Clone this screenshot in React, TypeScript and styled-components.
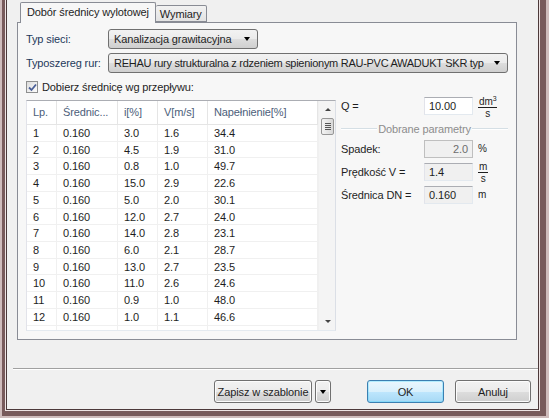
import React from "react";
import styled, { createGlobalStyle } from "styled-components";

const GlobalStyle = createGlobalStyle`
  html, body {
    margin: 0;
    padding: 0;
    overflow: hidden;
    background: #f0f0f0;
  }
  body {
    font-family: "Liberation Sans", Arial, sans-serif;
    font-size: 11px;
    letter-spacing: -0.12px;
    color: #1e1e1e;
  }
`;

const rows = [
  ["1", "0.160", "3.0", "1.6", "34.4"],
  ["2", "0.160", "4.5", "1.9", "31.0"],
  ["3", "0.160", "0.8", "1.0", "49.7"],
  ["4", "0.160", "15.0", "2.9", "22.6"],
  ["5", "0.160", "5.0", "2.0", "30.1"],
  ["6", "0.160", "12.0", "2.7", "24.0"],
  ["7", "0.160", "14.0", "2.8", "23.1"],
  ["8", "0.160", "6.0", "2.1", "28.7"],
  ["9", "0.160", "13.0", "2.7", "23.5"],
  ["10", "0.160", "11.0", "2.6", "24.6"],
  ["11", "0.160", "0.9", "1.0", "48.0"],
  ["12", "0.160", "1.0", "1.1", "46.6"],
];

const colWidths = [30, 61, 40, 50, 110];
const headers = ["Lp.", "Średnic...", "i[%]", "V[m/s]", "Napełnienie[%]"];

// --- ramka okna ---
const Shell = styled.div`
  box-sizing: border-box;
  height: 418px;
  width: 549px;
  background: #785a5b;
  border-style: solid;
  border-color: #cfbcbc;
  border-width: 0 3px 2px 2px;
  padding: 0 6px 5px 3px;
`;

const Edge = styled.div`
  box-sizing: border-box;
  height: 100%;
  border-style: solid;
  border-color: #eee4e4;
  border-width: 0 1px 1px 1px;
`;

const Window = styled.div`
  box-sizing: border-box;
  height: 100%;
  border-style: solid;
  border-color: #4c393a;
  border-width: 0 1px 1px 1px;
  background: #f0f0f0;
  display: flex;
  flex-direction: column;
`;

// --- zakładki ---
const Tabs = styled.div`
  margin: 2px 21px 0 10px;
  display: flex;
  flex-direction: column;
`;

const TabStrip = styled.div`
  display: flex;
  align-items: flex-end;
  height: 20px;
  padding-left: 3px;
  position: relative;
  z-index: 1;
`;

const Tab = styled.div<{ $active?: boolean }>`
  box-sizing: border-box;
  height: ${(p) => (p.$active ? 21 : 17)}px;
  line-height: ${(p) => (p.$active ? 19 : 16)}px;
  padding: 0 ${(p) => (p.$active ? 6 : 4)}px;
  border: 1px solid #898c95;
  border-bottom: ${(p) => (p.$active ? "none" : "1px solid #898c95")};
  border-left: ${(p) => (p.$active ? "1px solid #898c95" : "none")};
  border-radius: 2px 2px 0 0;
  background: ${(p) =>
    p.$active ? "#f7f7f7" : "linear-gradient(#f2f2f2, #e3e3e3)"};
  margin-bottom: ${(p) => (p.$active ? -1 : 0)}px;
`;

const Panel = styled.div`
  box-sizing: border-box;
  height: 318px;
  border: 1px solid #898c95;
  background: #f7f7f7;
  padding: 6px 6px 0 8px;
  display: flex;
  flex-direction: column;
`;

const FieldRow = styled.div`
  display: flex;
  align-items: center;
  height: 20px;
  margin-bottom: 4px;
`;

const FieldLabel = styled.div`
  width: 82px;
  color: #1e395b;
`;

const Combo = styled.div<{ $w: number }>`
  box-sizing: border-box;
  width: ${(p) => p.$w}px;
  height: 20px;
  border: 1px solid #707070;
  border-radius: 3px;
  background: linear-gradient(#f2f2f2 0%, #ebebeb 50%, #dddddd 51%, #cfcfcf 100%);
  display: flex;
  align-items: center;
  padding: 0 7px 0 5px;
  white-space: nowrap;
`;

const ComboText = styled.span<{ $tight?: boolean }>`
  flex: 1;
  min-width: 0;
  overflow: hidden;
  letter-spacing: ${(p) => (p.$tight ? "-0.28px" : "inherit")};
`;

const Arrow = styled.span`
  width: 0;
  height: 0;
  border-left: 3.5px solid transparent;
  border-right: 3.5px solid transparent;
  border-top: 4px solid #000;
  flex: none;
  margin-left: 4px;
`;

const CheckRow = styled.div`
  display: flex;
  align-items: center;
  margin-top: 2px;
  height: 16px;
  gap: 4px;
`;

const CheckBox = styled.span`
  box-sizing: border-box;
  width: 12px;
  height: 12px;
  border: 1px solid #8e8f8f;
  background: linear-gradient(135deg, #dcdcdc, #fdfdfd);
  display: flex;
  align-items: center;
  justify-content: center;
`;

const Body = styled.div`
  display: flex;
  margin-top: 5px;
  gap: 5px;
`;

// --- lista ---
const ListBox = styled.div`
  box-sizing: border-box;
  width: 310px;
  height: 231px;
  border: 1px solid;
  border-color: #abadb3 #dbdfe6 #e3e9ef #e2e3ea;
  background: #fff;
  display: flex;
  overflow: hidden;
`;

const Grid = styled.div`
  flex: 1;
  display: flex;
  flex-direction: column;
`;

const HeadRow = styled.div`
  display: flex;
  height: 23px;
  border-bottom: 1px solid #e5e5e5;
  flex: none;
`;

const HeadCell = styled.div<{ $w: number }>`
  box-sizing: border-box;
  width: ${(p) => p.$w}px;
  padding-left: 6px;
  line-height: 23px;
  border-right: 1px solid #e5e5e5;
  color: #4c607a;
  white-space: nowrap;
  overflow: hidden;
`;

const Row = styled.div`
  display: flex;
  height: 16.73px;
  flex: none;
`;

const Cell = styled.div<{ $w: number }>`
  box-sizing: border-box;
  width: ${(p) => p.$w}px;
  padding-left: 6px;
  line-height: 16px;
  border-right: 1px solid #f0f0f0;
  border-bottom: 1px solid #f0f0f0;
  color: #1e1e1e;
`;

const Filler = styled.div`
  flex: 1;
  display: flex;
`;

const FillCell = styled.div<{ $w: number }>`
  width: ${(p) => p.$w}px;
  box-sizing: border-box;
  border-right: 1px solid #f0f0f0;
`;

const ScrollBar = styled.div`
  width: 17px;
  flex: none;
  background: #f4f4f4;
  border-left: 1px solid #f0f0f0;
  display: flex;
  flex-direction: column;
  align-items: center;
`;

const ScrollArrow = styled.div<{ $down?: boolean }>`
  height: 17px;
  display: flex;
  align-items: center;
  justify-content: center;
  &::after {
    content: "";
    border-left: 3px solid transparent;
    border-right: 3px solid transparent;
    ${(p) =>
      p.$down ? "border-top: 3px solid #444;" : "border-bottom: 3px solid #444;"}
  }
`;

const Thumb = styled.div`
  box-sizing: border-box;
  width: 13px;
  height: 17px;
  border: 1px solid #979797;
  border-radius: 2px;
  background: linear-gradient(90deg, #f3f3f3, #e6e6e6 50%, #d8d8d8);
  display: flex;
  flex-direction: column;
  align-items: center;
  justify-content: center;
  gap: 1px;
`;

const Grip = styled.span`
  width: 6px;
  height: 1px;
  background: #555;
`;

const Track = styled.div`
  flex: 1;
`;

// --- prawa kolumna ---
const Side = styled.div`
  flex: 1;
  display: flex;
  flex-direction: column;
  padding-right: 2px;
`;

const ParamRow = styled.div<{ $mt?: number }>`
  display: flex;
  align-items: center;
  height: 18px;
  margin-top: ${(p) => p.$mt ?? 5}px;
`;

const ParamLabel = styled.div`
  width: 83px;
  color: #1e1e1e;
`;

const Input = styled.div<{ $kind?: "edit" | "disabled" | "readonly" }>`
  box-sizing: border-box;
  width: 49px;
  height: 18px;
  line-height: 16px;
  padding: 0 4px;
  border: 1px solid;
  border-color: ${(p) =>
    p.$kind === "disabled" ? "#bfbfbf" : "#abadb3 #e3e9ef #e3e9ef #e2e3ea"};
  background: ${(p) => (p.$kind === "edit" ? "#fff" : "#f0f0f0")};
  color: ${(p) => (p.$kind === "disabled" ? "#6d6d6d" : "#1e1e1e")};
  text-align: ${(p) => (p.$kind === "disabled" ? "right" : "left")};
`;

const Unit = styled.div`
  margin-left: 5px;
  font-size: 10px;
  line-height: 10px;
  color: #1e1e1e;
`;

const Fraction = styled.div`
  margin-left: 5px;
  display: inline-flex;
  flex-direction: column;
  align-items: center;
  font-size: 10px;
  line-height: 9px;
`;

const Numerator = styled.span`
  border-bottom: 1px solid #1e1e1e;
  padding: 0 1px 1px;
`;

const Sup = styled.sup`
  font-size: 7px;
`;

const Denominator = styled.span`
  padding-top: 1px;
`;

const GroupLine = styled.div`
  display: flex;
  align-items: center;
  margin-top: 8px;
  height: 12px;
  color: #8d8d8d;
  &::before,
  &::after {
    content: "";
    flex: 1;
    height: 1px;
    background: #d5dfe5;
    border-bottom: 1px solid #fff;
  }
`;

const GroupTitle = styled.span`
  padding: 0 1px;
`;

// --- dół okna ---
const Separator = styled.div`
  margin: 28px 0 0 6px;
  height: 1px;
  background: #a0a0a0;
  border-bottom: 1px solid #fff;
`;

const ButtonRow = styled.div`
  display: flex;
  justify-content: flex-end;
  align-items: center;
  margin-top: 10px;
  padding-right: 7px;
`;

const Button = styled.div<{ $w: number; $default?: boolean; $gap?: number }>`
  box-sizing: border-box;
  width: ${(p) => p.$w}px;
  height: 23px;
  margin-left: ${(p) => p.$gap ?? 0}px;
  border: 1px solid ${(p) => (p.$default ? "#3c7fb1" : "#707070")};
  border-radius: 3px;
  background: ${(p) =>
    p.$default
      ? "linear-gradient(#eaf6fd 0%, #d9f0fc 50%, #bee6fd 51%, #a7d9f5 100%)"
      : "linear-gradient(#f2f2f2 0%, #ebebeb 50%, #dddddd 51%, #cfcfcf 100%)"};
  box-shadow: ${(p) => (p.$default ? "inset 0 0 0 1px #48d7ff55" : "inset 0 0 0 1px #fcfcfc")};
  display: flex;
  align-items: center;
  justify-content: center;
  color: #1e1e1e;
`;

const ButtonArrow = styled(Arrow)`
  margin-left: 0;
`;

const CheckMark = () => (
  <svg width="9" height="9" viewBox="0 0 9 9">
    <path d="M1 4.5 L3.5 7 L8 1.5" fill="none" stroke="#4a5f97" strokeWidth="1.8" />
  </svg>
);

const App: React.FC = () => {
  return (
    <>
      <GlobalStyle />
      <Shell>
        <Edge>
          <Window>
            <Tabs>
              <TabStrip>
                <Tab $active>Dobór średnicy wylotowej</Tab>
                <Tab>Wymiary</Tab>
              </TabStrip>
              <Panel>
                <FieldRow>
                  <FieldLabel>Typ sieci:</FieldLabel>
                  <Combo $w={150}>
                    <ComboText>Kanalizacja grawitacyjna</ComboText>
                    <Arrow />
                  </Combo>
                </FieldRow>
                <FieldRow>
                  <FieldLabel>Typoszereg rur:</FieldLabel>
                  <Combo $w={400}>
                    <ComboText $tight>
                      REHAU rury strukturalna z rdzeniem spienionym RAU-PVC AWADUKT SKR typ
                    </ComboText>
                    <Arrow />
                  </Combo>
                </FieldRow>
                <CheckRow>
                  <CheckBox>
                    <CheckMark />
                  </CheckBox>
                  <span>Dobierz średnicę wg przepływu:</span>
                </CheckRow>
                <Body>
                  <ListBox>
                    <Grid>
                      <HeadRow>
                        {headers.map((h, i) => (
                          <HeadCell key={h} $w={colWidths[i]}>
                            {h}
                          </HeadCell>
                        ))}
                      </HeadRow>
                      {rows.map((r) => (
                        <Row key={r[0]}>
                          {r.map((v, i) => (
                            <Cell key={i} $w={colWidths[i]}>
                              {v}
                            </Cell>
                          ))}
                        </Row>
                      ))}
                      <Filler>
                        {colWidths.map((w, i) => (
                          <FillCell key={i} $w={w} />
                        ))}
                      </Filler>
                    </Grid>
                    <ScrollBar>
                      <ScrollArrow />
                      <Thumb>
                        <Grip />
                        <Grip />
                        <Grip />
                        <Grip />
                      </Thumb>
                      <Track />
                      <ScrollArrow $down />
                    </ScrollBar>
                  </ListBox>
                  <Side>
                    <ParamRow $mt={-3}>
                      <ParamLabel>Q =</ParamLabel>
                      <Input $kind="edit">10.00</Input>
                      <Fraction>
                        <Numerator>
                          dm<Sup>3</Sup>
                        </Numerator>
                        <Denominator>s</Denominator>
                      </Fraction>
                    </ParamRow>
                    <GroupLine>
                      <GroupTitle>Dobrane parametry</GroupTitle>
                    </GroupLine>
                    <ParamRow $mt={5}>
                      <ParamLabel>Spadek:</ParamLabel>
                      <Input $kind="disabled">2.0</Input>
                      <Unit>%</Unit>
                    </ParamRow>
                    <ParamRow>
                      <ParamLabel>Prędkość V =</ParamLabel>
                      <Input $kind="readonly">1.4</Input>
                      <Fraction>
                        <Numerator>m</Numerator>
                        <Denominator>s</Denominator>
                      </Fraction>
                    </ParamRow>
                    <ParamRow>
                      <ParamLabel>Średnica DN =</ParamLabel>
                      <Input $kind="readonly">0.160</Input>
                      <Unit>m</Unit>
                    </ParamRow>
                  </Side>
                </Body>
              </Panel>
            </Tabs>
            <Separator />
            <ButtonRow>
              <Button $w={98}>Zapisz w szablonie</Button>
              <Button $w={16} $gap={3}>
                <ButtonArrow />
              </Button>
              <Button $w={77} $gap={36} $default>
                OK
              </Button>
              <Button $w={76} $gap={11}>
                Anuluj
              </Button>
            </ButtonRow>
          </Window>
        </Edge>
      </Shell>
    </>
  );
};

export default App;
